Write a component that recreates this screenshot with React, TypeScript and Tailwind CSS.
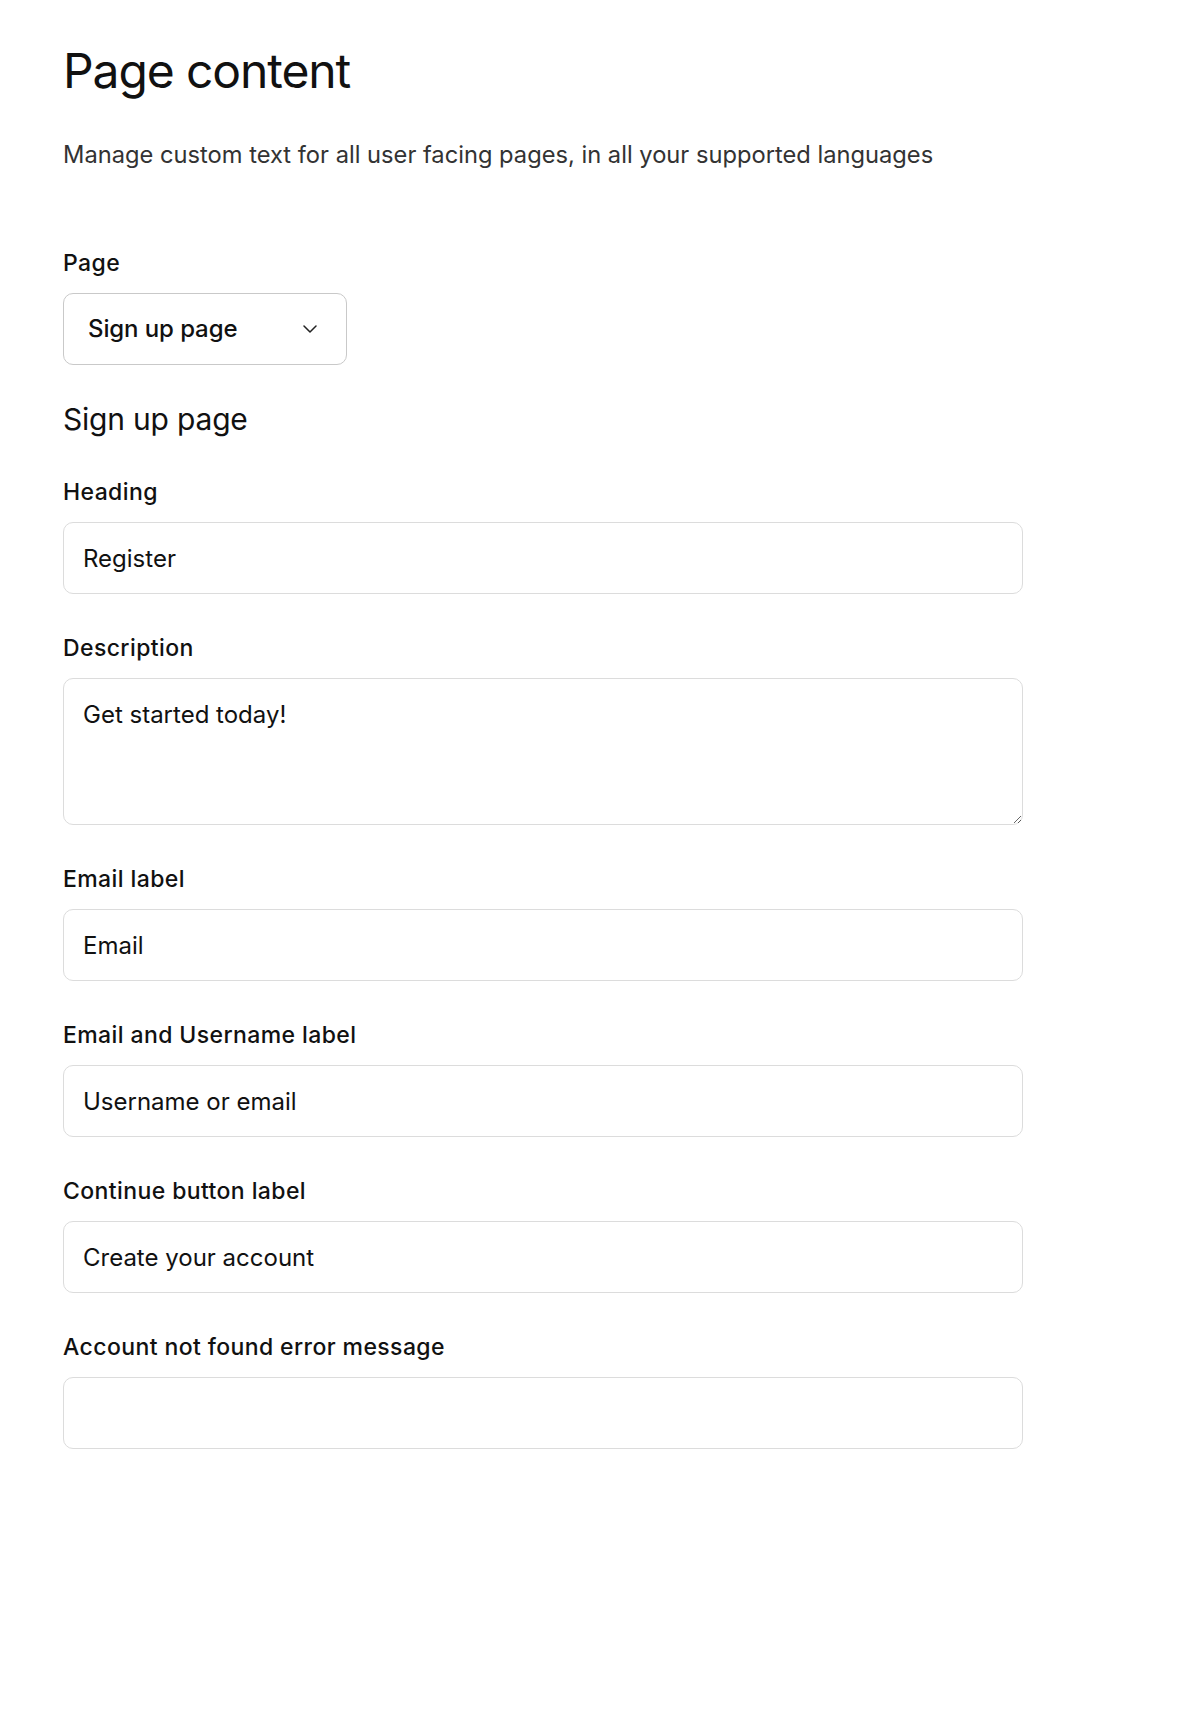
import { ChangeEvent, useState } from 'react'

interface Field {
  id: string
  label: string
  value: string
  multiline?: boolean
}

const initialFields: Field[] = [
  { id: 'heading', label: 'Heading', value: 'Register' },
  { id: 'description', label: 'Description', value: 'Get started today!', multiline: true },
  { id: 'email', label: 'Email label', value: 'Email' },
  { id: 'emailOrUsername', label: 'Email and Username label', value: 'Username or email' },
  { id: 'continue', label: 'Continue button label', value: 'Create your account' },
  { id: 'notFound', label: 'Account not found error message', value: '' },
]

// Shared look for inputs and the textarea
const controlClass =
  'block w-full rounded-[10px] border border-[#dcdcdc] bg-white px-[19px] text-[24px] leading-[36px] text-[#111] outline-none focus:border-[#9a9a9a]'

const labelClass = 'block text-[23px] leading-[32px] font-medium tracking-[0.4px] text-[#111]'

export default function App() {
  const [fields, setFields] = useState(initialFields)

  const update = (id: string) => (e: ChangeEvent<HTMLInputElement | HTMLTextAreaElement>) => {
    const value = e.target.value
    setFields((prev) => prev.map((f) => (f.id === id ? { ...f, value } : f)))
  }

  return (
    <div className="min-h-screen bg-white font-['Inter','Noto_Sans',sans-serif] text-[#111]">
      <div className="w-[960px] pl-[63px] pt-[43px] pb-[120px] box-content">
        <h1 className="text-[48px] leading-[56px] font-normal tracking-[-1.1px] text-[#111]">Page content</h1>
        <p className="mt-[40px] text-[23.7px] leading-[32px] text-[#333]">
          Manage custom text for all user facing pages, in all your supported languages
        </p>

        {/* Page picker */}
        <div className="mt-[76px]">
          <label className={labelClass}>Page</label>
          <button
            type="button"
            className="mt-[14px] flex h-[72px] w-[284px] items-center justify-between rounded-[10px] border border-[#c9c9c9] bg-white pl-[24px] pr-[29px] text-[24px] font-medium tracking-[-0.1px] text-[#111]"
          >
            <span>Sign up page</span>
            <svg width="14" height="8" viewBox="0 0 14 8" fill="none">
              <polyline points="1,1 7,7 13,1" stroke="#222" strokeWidth="1.5" strokeLinecap="round" strokeLinejoin="round" />
            </svg>
          </button>
        </div>

        <h2 className="mt-[34px] text-[30px] leading-[40px] font-normal tracking-[-0.2px] text-[#111]">Sign up page</h2>

        <div className="mt-[37px] flex flex-col gap-[38px]">
          {fields.map((f) => (
            <div key={f.id}>
              <label htmlFor={f.id} className={labelClass}>
                {f.label}
              </label>
              {f.multiline ? (
                <textarea
                  id={f.id}
                  value={f.value}
                  onChange={update(f.id)}
                  className={`${controlClass} mt-[14px] h-[147px] pt-[18px] pb-[16px]`}
                />
              ) : (
                <input
                  id={f.id}
                  type="text"
                  value={f.value}
                  onChange={update(f.id)}
                  className={`${controlClass} mt-[14px] h-[72px]`}
                />
              )}
            </div>
          ))}
        </div>
      </div>
    </div>
  )
}
